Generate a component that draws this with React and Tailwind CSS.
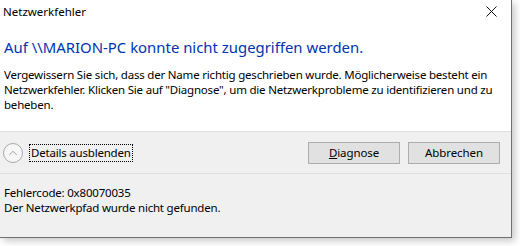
import { ChevronUp } from "lucide-react";

const font = { fontFamily: '"Noto Sans", "Open Sans", sans-serif' };

export default function App() {
  return (
    <div className="w-[520px] h-[246px] bg-white overflow-hidden" style={font}>
      <div className="w-[512px] h-[238px] flex flex-col border-r border-b border-[#707070] shadow-[3px_3px_7px_rgba(0,0,0,0.22)] bg-[#f0f0f0]">
        {/* title bar + content */}
        <div className="bg-white h-[131px] flex flex-col">
          <div className="h-[23px] flex items-center justify-between pl-[3px] pr-[14px]">
            <span className="text-[11.5px] text-black">Netzwerkfehler</span>
            <svg width="11" height="11" viewBox="0 0 11 11" className="mt-[-1px]">
              <path d="M0.5 0.5 L10.5 10.5 M10.5 0.5 L0.5 10.5" stroke="#111" strokeWidth="1" />
            </svg>
          </div>
          <div className="pl-[4px] pr-[4px] pt-[14px]">
            <h1 className="text-[14.9px] leading-[20px] text-[#0033b0]">
              Auf \\MARION-PC konnte nicht zugegriffen werden.
            </h1>
            <p className="mt-[10px] text-[11.5px] leading-[15px] text-black tracking-[-0.2px]">
              Vergewissern Sie sich, dass der Name richtig geschrieben wurde. Möglicherweise besteht ein Netzwerkfehler. Klicken Sie auf "Diagnose", um die Netzwerkprobleme zu identifizieren und zu beheben.
            </p>
          </div>
        </div>

        {/* expander + buttons */}
        <div className="h-[43px] border-t border-b border-[#dfdfdf] flex items-center pl-[3px] pr-[11px]">
          <div className="w-[20px] h-[20px] rounded-full border border-[#a8a8a8] bg-[#f7f7f7] flex items-center justify-center">
            <ChevronUp size={14} strokeWidth={1.4} color="#8a8a8a" />
          </div>
          <span className="ml-[6px] text-[11.5px] leading-[16px] px-[1px] border border-dotted border-black text-black tracking-[-0.2px]">
            Details ausblenden
          </span>
          <div className="ml-auto flex gap-[8px]">
            <button className="w-[92px] h-[22px] bg-[#e1e1e1] border border-[#adadad] text-[11.5px] text-black tracking-[-0.1px]">
              <span className="underline underline-offset-1">D</span>iagnose
            </button>
            <button className="w-[92px] h-[22px] bg-[#e1e1e1] border border-[#adadad] text-[11.5px] text-black tracking-[-0.1px]">
              Abbrechen
            </button>
          </div>
        </div>

        {/* details */}
        <div className="pl-[4px] pt-[11px] text-[11.5px] leading-[15px] text-black tracking-[-0.2px]">
          <div>Fehlercode: 0x80070035</div>
          <div>Der Netzwerkpfad wurde nicht gefunden.</div>
        </div>
      </div>
    </div>
  );
}
